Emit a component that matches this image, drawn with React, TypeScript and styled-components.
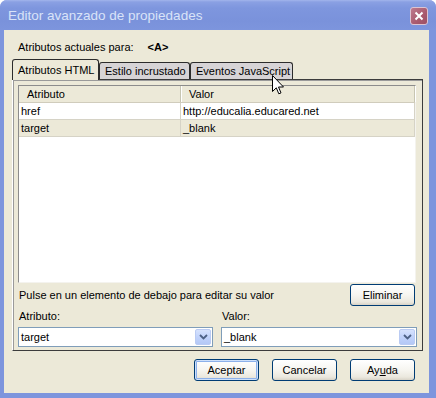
import styled, { createGlobalStyle } from "styled-components";

const GlobalStyle = createGlobalStyle`
  html, body {
    margin: 0;
    padding: 0;
    background: #ffffff;
  }
  body {
    font-family: "Liberation Sans", Arial, sans-serif;
    font-size: 11px;
    color: #000;
  }
`;

const Window = styled.div`
  position: relative;
  width: 436px;
  height: 398px;
  box-sizing: border-box;
  display: flex;
  flex-direction: column;
  background: #7d95dd;
  border-radius: 7px 7px 0 0;
  overflow: hidden;
`;

const TitleBar = styled.div`
  height: 30px;
  flex: none;
  display: flex;
  align-items: center;
  justify-content: space-between;
  padding: 0 8px 0 8px;
  background: linear-gradient(#a2b5ec 0, #8aa0e3 2px, #7e96de 8px, #7a92db 70%, #7d95dd 100%);
`;

const Title = styled.span`
  font-family: "Liberation Sans", Arial, sans-serif;
  font-size: 13.5px;
  color: #d9e3f8;
  padding-top: 1px;
`;

const CloseButton = styled.div`
  width: 18px;
  height: 18px;
  box-sizing: border-box;
  border: 1px solid #dcc4d2;
  border-radius: 3px;
  background: linear-gradient(135deg, #be7a8e, #a95a6e 60%, #9c4f64);
  display: flex;
  align-items: center;
  justify-content: center;
  margin-top: 1px;
`;

const Body = styled.div`
  flex: 1;
  margin: 0 7px 5px 4px;
  background: #ece9d8;
  display: flex;
  flex-direction: column;
  padding: 0 6px 0 8px;
`;

const InfoRow = styled.div`
  display: flex;
  margin: 11px 0 0 6px;
  line-height: 13px;
  height: 13px;
`;

const Current = styled.span`
  font-weight: bold;
  margin-left: 14px;
`;

const TabStrip = styled.div`
  display: flex;
  align-items: flex-end;
  height: 20px;
  margin-top: 5px;
  position: relative;
  z-index: 2;
`;

const Tab = styled.div<{ $active?: boolean; $w: number }>`
  width: ${(p) => p.$w}px;
  height: ${(p) => (p.$active ? 21 : 17)}px;
  margin-bottom: ${(p) => (p.$active ? -1 : 0)}px;
  box-sizing: border-box;
  border: 1px solid #2c2c2c;
  border-bottom: none;
  border-radius: 3px 3px 0 0;
  background: ${(p) => (p.$active ? "#ece9d8" : "#d7d4d6")};
  padding: ${(p) => (p.$active ? "3px" : "1px")} 0 0 5px;
  line-height: 14px;
  white-space: nowrap;
`;

const Panel = styled.div`
  height: 272px;
  box-sizing: border-box;
  border: 1px solid #3c3c3c;
  border-left-color: #ffffff;
  box-shadow: inset 1px 1px 0 #9a9a9a;
  padding: 5px 6px 3px 5px;
  display: flex;
  flex-direction: column;
`;

const List = styled.div`
  height: 198px;
  flex: none;
  box-sizing: border-box;
  background: #ffffff;
  border: 1px solid;
  border-color: #8c8c8c #f4f3ee #f4f3ee #8c8c8c;
  display: flex;
  flex-direction: column;
`;

const HeaderRow = styled.div`
  display: flex;
  height: 16px;
  background: #ece9d8;
  border-bottom: 1px solid #d0ccbc;
  box-shadow: 0 1px 0 #e2decd;
`;

const HeaderCell = styled.div<{ $w?: number }>`
  ${(p) => (p.$w ? `width: ${p.$w}px; flex: none;` : "flex: 1;")}
  box-sizing: border-box;
  padding: 2px 0 0 8px;
  line-height: 13px;
  border-right: 1px solid #c7c5b2;
  box-shadow: 1px 0 0 #ffffff;
`;

const Row = styled.div<{ $alt?: boolean }>`
  display: flex;
  height: 17px;
  box-sizing: border-box;
  border-bottom: 1px solid #d6d3c6;
  background: ${(p) => (p.$alt ? "#ece9d8" : "#ffffff")};
`;

const Cell = styled.div<{ $w?: number }>`
  ${(p) => (p.$w ? `width: ${p.$w}px; flex: none;` : "flex: 1;")}
  box-sizing: border-box;
  padding: 2px 0 0 2px;
  line-height: 13px;
  border-right: 1px solid #d6d3c6;
`;

const HintRow = styled.div`
  display: flex;
  align-items: center;
  justify-content: space-between;
  margin-top: 1px;
  height: 22px;
  padding: 0 1px 0 1px;
`;

const Fields = styled.div`
  display: grid;
  grid-template-columns: 195px 196px;
  column-gap: 8px;
  margin-top: 4px;
`;

const Field = styled.div`
  display: flex;
  flex-direction: column;
`;

const Label = styled.label`
  line-height: 13px;
  padding-left: 1px;
  margin-bottom: 4px;
`;

const Combo = styled.div`
  height: 20px;
  box-sizing: border-box;
  border: 1px solid #7f9db9;
  background: #ffffff;
  display: flex;
  align-items: center;
  justify-content: space-between;
  padding: 0 1px 0 2px;
`;

const ComboArrow = styled.div`
  width: 16px;
  height: 16px;
  box-sizing: border-box;
  border: 1px solid #bacbf3;
  border-radius: 2px;
  background: linear-gradient(#d6e2fd, #c1d3fb 50%, #b4c8f6);
  display: flex;
  align-items: center;
  justify-content: center;
`;

const ButtonRow = styled.div`
  display: flex;
  justify-content: flex-end;
  gap: 13px;
  margin-top: 8px;
  padding-right: 8px;
`;

const Button = styled.div<{ $default?: boolean }>`
  width: 65px;
  height: 22px;
  box-sizing: border-box;
  border: 1px solid #003c74;
  border-radius: 3px;
  background: linear-gradient(#ffffff, #f6f5f0 50%, #ebe8de 85%, #d8d3c7);
  display: flex;
  align-items: center;
  justify-content: center;
  line-height: 13px;
  box-shadow: ${(p) =>
    p.$default ? "inset 0 0 0 1px #cde0fb, inset 0 0 0 2px #8cb0ea" : "none"};
`;

const Cursor = styled.svg`
  position: absolute;
  left: 272px;
  top: 75px;
  z-index: 10;
`;

const Chevron = () => (
  <svg width="9" height="6" viewBox="0 0 9 6">
    <path d="M1 1 L4.5 4.5 L8 1" fill="none" stroke="#4d6185" strokeWidth="1.8" />
  </svg>
);

const App = () => {
  return (
    <>
      <GlobalStyle />
      <Window>
        <TitleBar>
          <Title>Editor avanzado de propiedades</Title>
          <CloseButton>
            <svg width="10" height="10" viewBox="0 0 10 10">
              <path d="M1.5 1.5 L8.5 8.5 M8.5 1.5 L1.5 8.5" stroke="#ffffff" strokeWidth="2" />
            </svg>
          </CloseButton>
        </TitleBar>
        <Body>
          <InfoRow>
            Atributos actuales para:
            <Current>&lt;A&gt;</Current>
          </InfoRow>
          <TabStrip>
            <Tab $active $w={87}>Atributos HTML</Tab>
            <Tab $w={91}>Estilo incrustado</Tab>
            <Tab $w={103}>Eventos JavaScript</Tab>
          </TabStrip>
          <Panel>
            <List>
              <HeaderRow>
                <HeaderCell $w={162}>Atributo</HeaderCell>
                <HeaderCell>Valor</HeaderCell>
              </HeaderRow>
              <Row>
                <Cell $w={162}>href</Cell>
                <Cell>http://educalia.educared.net</Cell>
              </Row>
              <Row $alt>
                <Cell $w={162}>target</Cell>
                <Cell>_blank</Cell>
              </Row>
            </List>
            <HintRow>
              <span>Pulse en un elemento de debajo para editar su valor</span>
              <Button>Eliminar</Button>
            </HintRow>
            <Fields>
              <Field>
                <Label>Atributo:</Label>
                <Combo>
                  target
                  <ComboArrow>
                    <Chevron />
                  </ComboArrow>
                </Combo>
              </Field>
              <Field>
                <Label>Valor:</Label>
                <Combo>
                  _blank
                  <ComboArrow>
                    <Chevron />
                  </ComboArrow>
                </Combo>
              </Field>
            </Fields>
          </Panel>
          <ButtonRow>
            <Button $default>Aceptar</Button>
            <Button>Cancelar</Button>
            <Button>
              <span>
                Ay<u>u</u>da
              </span>
            </Button>
          </ButtonRow>
        </Body>
        <Cursor width="13" height="21" viewBox="0 0 13 21">
          <path
            d="M0.5 0.5 L0.5 16.5 L4.3 12.8 L6.8 18.8 L9 17.9 L6.5 12 L11.5 12 Z"
            fill="#ffffff"
            stroke="#000000"
            strokeWidth="1"
          />
        </Cursor>
      </Window>
    </>
  );
};

export default App;
